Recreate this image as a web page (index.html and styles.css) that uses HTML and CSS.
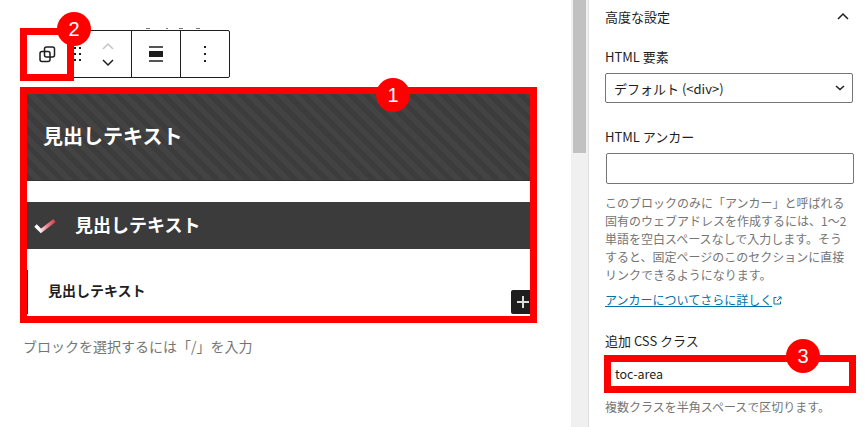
FILE: index.html
```html
<!DOCTYPE html>
<html lang="ja">

<head>
	<meta charset="UTF-8">
	<title>Block settings</title>
	<link rel="stylesheet" href="styles.css">
</head>

<body>
	<div class="page">
		<main class="editor">
			<div class="toolbar">
				<svg class="ticks" width="60" height="2" viewBox="0 0 60 2" fill="#777">
					<rect x="0" y="0" width="4" height="1"></rect>
					<rect x="20" y="0" width="2" height="1"></rect>
					<rect x="33" y="0" width="4" height="1"></rect>
					<rect x="50" y="0" width="4" height="1"></rect>
				</svg>
				<div class="tool tool-copy">
					<svg width="24" height="24" viewBox="0 0 24 24" fill="none" stroke="#1e1e1e" stroke-width="1.5">
						<rect x="5" y="9.5" width="10" height="10" rx="2"></rect>
						<rect x="9.5" y="5" width="10" height="10" rx="2"></rect>
					</svg>
				</div>
				<div class="tool tool-move">
					<svg class="drag" width="8" height="16" viewBox="0 0 8 16" fill="#1e1e1e">
						<rect x="0" y="0" width="2" height="2"></rect>
						<rect x="5" y="0" width="2" height="2"></rect>
						<rect x="0" y="6" width="2" height="2"></rect>
						<rect x="5" y="6" width="2" height="2"></rect>
						<rect x="0" y="12" width="2" height="2"></rect>
						<rect x="5" y="12" width="2" height="2"></rect>
					</svg>
					<div class="arrows">
						<svg width="14" height="8" viewBox="0 0 14 8" fill="none" stroke="#c4c4c4" stroke-width="1.5"><path d="M2 7l5-5 5 5"></path></svg>
						<svg width="14" height="8" viewBox="0 0 14 8" fill="none" stroke="#1e1e1e" stroke-width="1.5"><path d="M2 1l5 5 5-5"></path></svg>
					</div>
				</div>
				<div class="tool tool-align">
					<svg width="14" height="16" viewBox="0 0 14 16">
						<rect x="0" y="0" width="14" height="2" fill="#555"></rect>
						<rect x="0" y="5" width="14" height="6" fill="#1e1e1e"></rect>
						<rect x="0" y="14" width="14" height="2" fill="#555"></rect>
					</svg>
				</div>
				<div class="tool tool-more">
					<svg width="4" height="16" viewBox="0 0 4 16" fill="#1e1e1e">
						<rect x="1" y="0" width="2" height="2"></rect>
						<rect x="1" y="7" width="2" height="2"></rect>
						<rect x="1" y="14" width="2" height="2"></rect>
					</svg>
				</div>
				<div class="mark mark-copy"></div>
				<span class="badge badge-two">2</span>
			</div>

			<div class="blocks">
				<h2 class="head head-stripe">見出しテキスト</h2>
				<h2 class="head head-check">
					<svg width="24" height="16" viewBox="0 0 24 16" fill="none">
						<defs>
							<linearGradient id="checkFade" gradientUnits="userSpaceOnUse" x1="3" y1="0" x2="23" y2="0">
								<stop offset="0.15" stop-color="#ffffff"></stop>
								<stop offset="0.55" stop-color="#e88a8f"></stop>
								<stop offset="1" stop-color="#d8303a"></stop>
							</linearGradient>
						</defs>
						<path d="M2.500 7.500L8 13L21.500 2.500" stroke="url(#checkFade)" stroke-width="3.500"></path>
					</svg>
					<span>見出しテキスト</span>
				</h2>
				<h3 class="head-plain">見出しテキスト</h3>
				<div class="add-block">
					<svg width="12" height="12" viewBox="0 0 12 12" fill="#dcdcdc">
						<rect x="0" y="5" width="12" height="2"></rect>
						<rect x="5" y="0" width="2" height="12"></rect>
					</svg>
				</div>
				<span class="badge badge-one">1</span>
			</div>

			<p class="placeholder">ブロックを選択するには「/」を入力</p>
		</main>

		<div class="scrollbar">
			<div class="scrollbar-thumb"></div>
		</div>

		<aside class="sidebar">
			<div class="panel-title">
				<span>高度な設定</span>
				<svg width="14" height="8" viewBox="0 0 14 8" fill="none" stroke="#1e1e1e" stroke-width="1.500"><path d="M2 7l5-5 5 5"></path></svg>
			</div>

			<label class="field-label label-element">HTML 要素</label>
			<div class="select-box">
				<span>デフォルト (&lt;div&gt;)</span>
				<svg width="10" height="6" viewBox="0 0 10 6" fill="none" stroke="#1e1e1e" stroke-width="1.500"><path d="M1 1l4 3.500L9 1"></path></svg>
			</div>

			<label class="field-label label-anchor">HTML アンカー</label>
			<div class="text-box"></div>
			<p class="help">このブロックのみに「アンカー」と呼ばれる固有のウェブアドレスを作成するには、1〜2単語を空白スペースなしで入力します。そうすると、固定ページのこのセクションに直接リンクできるようになります。</p>
			<a class="help-link" href="#">アンカーについてさらに詳しく<svg width="9" height="9" viewBox="0 0 9 9" fill="none" stroke="#0073aa" stroke-width="1"><path d="M3.500 1.500H1v6.500h6.500V5.500M4 5l4-4M5.500 1H8v2.500"></path></svg></a>

			<label class="field-label label-css">追加 CSS クラス</label>
			<div class="css-box">
				<span>toc-area</span>
				<span class="badge badge-three">3</span>
			</div>
			<p class="help help-css">複数クラスを半角スペースで区切ります。</p>
		</aside>
	</div>
</body>

</html>
```

FILE: styles.css
```css
*,
*::before,
*::after {
	box-sizing: border-box;
}

html,
body {
	height: 100%;
}

body {
	margin: 0;
	overflow: hidden;
	background-color: #fff;
	color: #1e1e1e;
	font-family: "Noto Sans CJK JP", "Liberation Sans", sans-serif;
}

.page {
	display: grid;
	grid-template-columns: 571px 17px 1fr;
	height: 427px;
}

/* editor side */
.editor {
	padding: 30px 34px 0 20px;
}

.toolbar {
	position: relative;
	display: flex;
	width: 210px;
	height: 48px;
	border: 1px solid #1e1e1e;
	border-radius: 2px;
}

.ticks {
	position: absolute;
	top: -3px;
	left: 125px;
}

.tool {
	display: flex;
	align-items: center;
	justify-content: center;
	height: 100%;
}

.tool-copy {
	width: 52px;
}

.tool-move {
	justify-content: flex-start;
	gap: 19px;
	width: 59px;
	border-right: 1px solid #1e1e1e;
}

.drag {
	margin: 2px 0 0 1px;
}

.arrows {
	display: flex;
	flex-direction: column;
	gap: 9px;
}

.tool-align {
	width: 49px;
	border-right: 1px solid #1e1e1e;
}

.tool-more {
	flex: 1;
}

.mark {
	position: absolute;
	border: 7px solid #f00;
}

.mark-copy {
	top: -3px;
	left: -1px;
	width: 54px;
	height: 53px;
}

.badge {
	position: absolute;
	display: flex;
	align-items: center;
	justify-content: center;
	width: 34px;
	height: 34px;
	border-radius: 50%;
	background-color: #f00;
	color: #fff;
	font-family: "Liberation Sans", sans-serif;
	font-size: 20px;
}

.badge-two {
	top: -19px;
	left: 36px;
}

.badge-one {
	top: -16px;
	left: 349px;
}

.badge-three {
	top: -23px;
	left: 175px;
}

.blocks {
	position: relative;
	width: 517px;
	height: 236px;
	margin-top: 9px;
	border: 7px solid #f00;
}

.head {
	margin: 0;
	color: #fff;
	font-weight: 700;
}

.head-stripe {
	display: flex;
	align-items: center;
	height: 87px;
	padding: 0 0 4px 16px;
	border-bottom: 1px solid #333;
	background-color: #3c3c3c;
	background-image: repeating-linear-gradient(45deg, #3c3c3c 0, #3c3c3c 5.5px, #434343 5.5px, #434343 11px);
	font-size: 20px;
}

.head-check {
	display: flex;
	align-items: center;
	gap: 18px;
	height: 47px;
	margin-top: 21px;
	padding: 0 0 0 6px;
	background-color: #3b3b3b;
	font-size: 18px;
}

.head-check span {
	margin-top: -4px;
}

.head-plain {
	display: flex;
	align-items: center;
	height: 44px;
	margin: 21px 0 0;
	padding: 0 0 4px 20px;
	border-left: 1px solid #1e1e1e;
	font-size: 14px;
	font-weight: 700;
}

.add-block {
	position: absolute;
	right: 0;
	bottom: 2px;
	display: flex;
	align-items: center;
	justify-content: center;
	width: 19px;
	height: 24px;
	padding-left: 5px;
	border-radius: 2px 0 0 2px;
	background-color: #1e1e1e;
}

.placeholder {
	margin: 13px 0 0 3px;
	color: #757575;
	font-size: 14px;
	line-height: 20px;
}

/* scrollbar */
.scrollbar {
	padding: 0 2px;
	background-color: #f0f0f0;
}

.scrollbar-thumb {
	width: 13px;
	height: 153px;
	background-color: #c1c1c1;
}

/* settings side */
.sidebar {
	padding: 0 12px 0 16px;
	border-left: 1px solid #e0e0e0;
	font-size: 13px;
}

.panel-title {
	display: flex;
	align-items: center;
	justify-content: space-between;
	height: 18px;
	margin-top: 7px;
	padding-right: 6px;
}

.field-label {
	display: block;
	height: 18px;
	line-height: 18px;
}

.label-element {
	margin-top: 23px;
}

.select-box {
	display: flex;
	align-items: center;
	justify-content: space-between;
	width: 248px;
	height: 30px;
	margin-top: 7px;
	padding: 0 7px 0 8px;
	border: 1px solid #757575;
	border-radius: 2px;
}

.label-anchor {
	margin-top: 25px;
}

.text-box {
	width: 248px;
	height: 31px;
	margin: 7px 0 0 1px;
	border: 1px solid #757575;
	border-radius: 2px;
}

.help {
	max-width: 244px;
	margin: 10px 0 0;
	color: #757575;
	font-size: 12px;
	line-height: 18px;
}

.help-link {
	display: inline-block;
	margin-top: 7px;
	color: #0073aa;
	font-size: 12px;
	line-height: 18px;
}

.help-link svg {
	margin-left: 1px;
}

.label-css {
	margin-top: 23px;
}

.css-box {
	position: relative;
	display: flex;
	align-items: center;
	width: 252px;
	height: 38px;
	margin: 5px 0 0 -1px;
	padding: 0 0 2px 4px;
	border: 7px solid #f00;
	font-size: 12.5px;
}

.help.help-css {
	max-width: none;
	margin-top: 5px;
}
```
